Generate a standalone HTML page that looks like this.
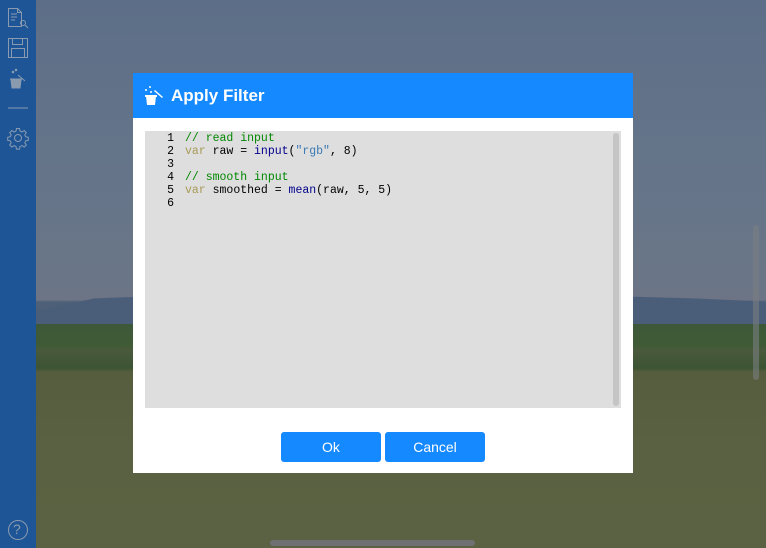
<!DOCTYPE html>
<html><head><style>
*{margin:0;padding:0;box-sizing:border-box}
html,body{width:766px;height:548px;overflow:hidden}
body{position:relative;font-family:"Liberation Sans",sans-serif;background:#5b6242}
.bg{position:absolute;left:0;top:0;width:766px;height:548px;
background:linear-gradient(180deg,#5d6e88 0px,#647489 150px,#6a7688 280px,#6c7485 300px,#4d6078 302px,#4c5f78 318px,#3d5838 322px,#3f5b36 345px,#4a5a3c 350px,#3c5433 368px,#565d3e 372px,#5a6142 450px,#5b6243 548px)}
.mtn{position:absolute;left:36px;top:292px;width:730px;height:32px;background:#4b5e79;clip-path:polygon(0 60%,8% 20%,14% 15%,20% 40%,30% 55%,50% 70%,70% 45%,82% 15%,90% 20%,100% 30%,100% 100%,0 100%)}
.side{position:absolute;left:0;top:0;width:36px;height:548px;background:#1d5596}
.dlg{position:absolute;left:133px;top:73px;width:500px;height:400px;background:#fff}
.hd{height:45px;background:#1589ff;color:#fff;font-size:17px;font-weight:bold;line-height:46px;padding-left:38px;position:relative}
.code{position:absolute;left:12px;top:58px;width:476px;height:277px;background:#dedede;font-family:"Liberation Mono",monospace;font-size:11.5px;line-height:13px;padding-top:1px}
.ln{position:absolute;left:0;width:29px;text-align:right;color:#000}
.tx{position:absolute;left:40px;white-space:pre;color:#000}
.c{color:#080}.k{color:#a89a56}.f{color:#00008b}.s{color:#3a7ab3}
.sb{position:absolute;left:468px;top:2px;width:6px;height:273px;background:#c5c5c5;border-radius:3px}
.btn{position:absolute;top:359px;width:100px;height:30px;background:#1589ff;color:#fff;border-radius:3px;text-align:center;line-height:30px;font-size:14px}
</style></head><body>
<div class="bg"></div><div class="mtn"></div>
<div style="position:absolute;left:753px;top:225px;width:6px;height:155px;background:#7a7d80;border-radius:3px;opacity:.6"></div>
<div style="position:absolute;left:270px;top:540px;width:205px;height:6px;background:#6f7072;border-radius:3px"></div>
<div class="side">
<svg width="36" height="548" fill="none" stroke="#8a9bb0" stroke-width="1">
<path d="M8.5 8.5h9l4 4v14h-13z M17.5 8.5v4h4 M11 14h6 M11 17h6 M11 20h4"/><circle cx="23" cy="23" r="2.5"/><path d="M25 25l3 3"/>
<path d="M8.5 38.5h19v19h-19z M12.5 38.5v6h10v-6 M11.5 48.5h13v9h-13z"/>
<path d="M11 80h10l-1 8h-8z" fill="#8a9bb0"/><path d="M10 79h12 M18 75l7 6" /><circle cx="13" cy="72" r=".8" fill="#8a9bb0"/><circle cx="16" cy="70" r=".8" fill="#8a9bb0"/>
<path d="M8 108h20"/>
<circle cx="18" cy="138" r="3.5"/>
<path d="M16.5 128.5h3l.5 2.5 2 1 2.2-1.5 2.1 2.1-1.5 2.2 1 2 2.5.5v3l-2.5.5-1 2 1.5 2.2-2.1 2.1-2.2-1.5-2 1-.5 2.5h-3l-.5-2.5-2-1-2.2 1.5-2.1-2.1 1.5-2.2-1-2-2.5-.5v-3l2.5-.5 1-2-1.5-2.2 2.1-2.1 2.2 1.5 2-1z"/>
<circle cx="18" cy="530" r="9.5"/>
</svg>
<div style="position:absolute;left:13px;top:521px;color:#8a9bb0;font-size:14px">?</div>
</div>
<div class="dlg">
<div class="hd"><svg style="position:absolute;left:10px;top:12px" width="22" height="22" fill="#fff"><path d="M3 11h10l-1 9H4z"/><rect x="2" y="10" width="12" height="2"/><path d="M12 5l8 7-1 1-8-7z"/><circle cx="3" cy="5" r="1"/><circle cx="7" cy="2" r="1"/><circle cx="8" cy="7" r="1"/></svg>Apply Filter</div>
<div class="code">
<div class="ln" style="top:1px">1<br>2<br>3<br>4<br>5<br>6</div>
<div class="tx" style="top:1px"><span class="c">// read input</span>
<span class="k">var</span> raw = <span class="f">input</span>(<span class="s">"rgb"</span>, 8)

<span class="c">// smooth input</span>
<span class="k">var</span> smoothed = <span class="f">mean</span>(raw, 5, 5)
</div>
<div class="sb"></div>
</div>
<div class="btn" style="left:148px">Ok</div>
<div class="btn" style="left:252px">Cancel</div>
</div>
</body></html>
